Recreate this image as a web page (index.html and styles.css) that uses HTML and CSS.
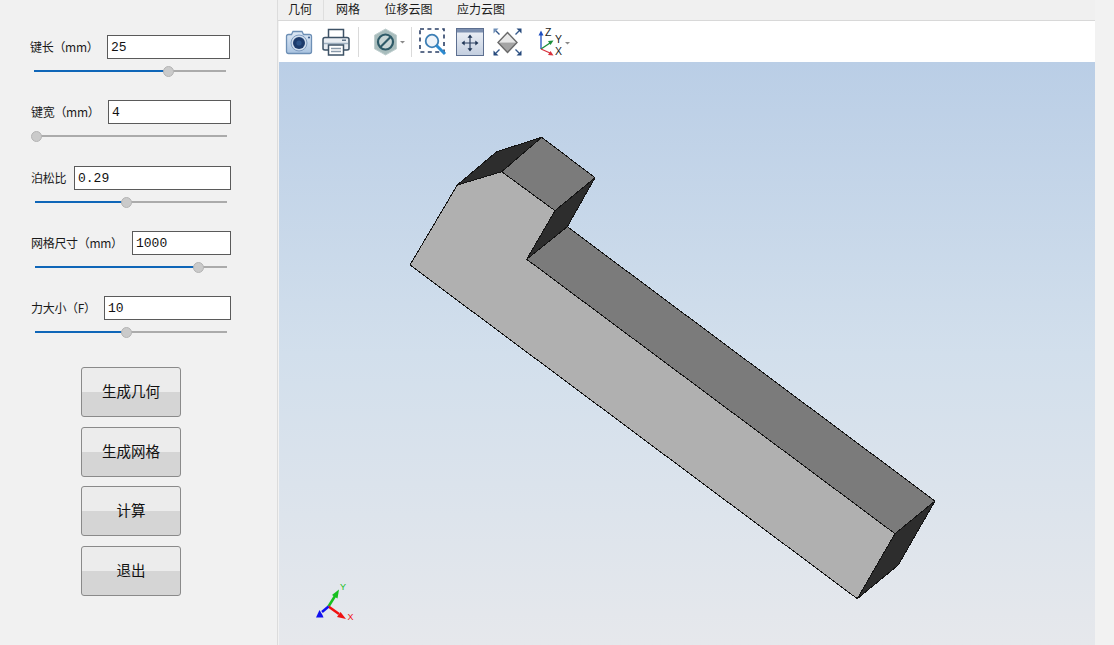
FILE: index.html
```html
<!DOCTYPE html>
<html lang="zh">
<head>
<meta charset="utf-8">
<title>键参数</title>
<link rel="stylesheet" href="styles.css">
</head>
<body>
<div class="app">
  <aside class="panel">
    <div class="field field-a">
      <div class="field-row"><label class="field-label">键长（mm）</label><input class="field-input w-a" value="25"></div>
      <div class="slider"><div class="slider-fill" style="width:70%"></div><div class="slider-knob" style="left:70%"></div></div>
    </div>
    <div class="field">
      <div class="field-row"><label class="field-label">键宽（mm）</label><input class="field-input w-a" value="4"></div>
      <div class="slider"><div class="slider-fill" style="width:0"></div><div class="slider-knob" style="left:.5%"></div></div>
    </div>
    <div class="field field-c">
      <div class="field-row"><label class="field-label">泊松比</label><input class="field-input w-c" value="0.29"></div>
      <div class="slider"><div class="slider-fill" style="width:47.5%"></div><div class="slider-knob" style="left:47.5%"></div></div>
    </div>
    <div class="field">
      <div class="field-row"><label class="field-label">网格尺寸（mm）</label><input class="field-input w-d" value="1000"></div>
      <div class="slider"><div class="slider-fill" style="width:85%"></div><div class="slider-knob" style="left:85%"></div></div>
    </div>
    <div class="field">
      <div class="field-row"><label class="field-label">力大小（F）</label><input class="field-input w-e" value="10"></div>
      <div class="slider"><div class="slider-fill" style="width:47.5%"></div><div class="slider-knob" style="left:47.5%"></div></div>
    </div>
    <div class="actions">
      <button class="action">生成几何</button>
      <button class="action">生成网格</button>
      <button class="action action-tight">计算</button>
      <button class="action">退出</button>
    </div>
  </aside>

  <main class="workspace">
    <nav class="tabs">
      <div class="tab tab-active">几何</div>
      <div class="tab">网格</div>
      <div class="tab">位移云图</div>
      <div class="tab">应力云图</div>
    </nav>
    <div class="toolbar">
      <svg class="icon i-camera" width="28" height="28" viewBox="0 0 28 28">
        <defs><linearGradient id="cam" x1="0" y1="0" x2="0" y2="1"><stop offset="0" stop-color="#dfe9f5"/><stop offset="1" stop-color="#a9c3e0"/></linearGradient></defs>
        <g transform="translate(0 1)">
          <path d="M1.5 7.5q0-2 2-2h3l1.5-3h9l1.5 3h6q2 0 2 2v15q0 2-2 2h-21q-2 0-2-2z" fill="url(#cam)" stroke="#6d8fb5" stroke-width="1.3"/>
          <circle cx="14" cy="14" r="8" fill="#cfdcec" stroke="#7f9cc0"/>
          <circle cx="14" cy="14" r="6" fill="#1c3a6b"/>
          <circle cx="14" cy="14" r="2.6" fill="#2c5288"/>
          <circle cx="24" cy="8.5" r="1.1" fill="#41628f"/>
        </g>
      </svg>
      <svg class="icon i-printer" width="28" height="28" viewBox="0 0 28 28">
        <path d="M6.5 10V1.500h15V10" fill="#fff" stroke="#3d5266" stroke-width="1.5"/>
        <path d="M3 9.500h22q2 0 2 2v9q0 1.500-2 1.500H3q-2 0-2-1.500v-9q0-2 2-2z" fill="#e9edf2" stroke="#3d5266" stroke-width="1.5"/>
        <path d="M2 15.500h24" stroke="#9fb0c0" stroke-width="1.5"/>
        <rect x="20" y="11.500" width="4" height="1.500" fill="#5f7488"/>
        <rect x="6.500" y="17" width="15" height="10" fill="#fff" stroke="#3d5266" stroke-width="1.5"/>
        <path d="M9 20.500h10M9 23.500h10" stroke="#8a9aaa" stroke-width="1.5"/>
      </svg>
      <div class="divider d-one"></div>
      <svg class="icon i-display" width="34" height="28" viewBox="0 0 34 28">
        <path d="M12.500 1 23.500 7.200v13.600L12.500 27 1.500 20.800V7.200z" fill="#a8bcbc" stroke="#c0cfcf" stroke-width="1"/>
        <circle cx="12.500" cy="14" r="7.500" fill="#c9d6d6" stroke="#2e5a68" stroke-width="2.200"/>
        <path d="M7.500 19 17.500 9" stroke="#2e5a68" stroke-width="2.200"/>
        <path d="M27 13h5l-2.500 2.500z" fill="#8a8a8a"/>
      </svg>
      <div class="divider d-two"></div>
      <svg class="icon i-zoom" width="28" height="28" viewBox="0 0 28 28">
        <rect x="1" y="1" width="24" height="23" fill="none" stroke="#2a3f66" stroke-width="1.600" stroke-dasharray="4 3.400"/>
        <circle cx="13" cy="13" r="6.300" fill="#eef3f9" stroke="#3d7fb5" stroke-width="1.800"/>
        <path d="M17.500 17.500 26 26" stroke="#2b8ad0" stroke-width="3"/>
      </svg>
      <svg class="icon i-fit" width="28" height="28" viewBox="0 0 28 28">
        <defs><linearGradient id="fit" x1="0" y1="0" x2="0" y2="1"><stop offset="0" stop-color="#f0f3f8"/><stop offset="1" stop-color="#c3cedf"/></linearGradient></defs>
        <rect x=".5" y=".5" width="27" height="27" fill="url(#fit)" stroke="#5d6f90"/>
        <rect x="1" y="1" width="26" height="3.500" fill="#7d90b0"/>
        <path d="M14 8v14M7 15h14" stroke="#2b3f60" stroke-width="1.200"/>
        <path d="M14 6.500l2.500 3.200h-5zM14 23.500l2.500-3.200h-5zM5.500 15l3.200-2.500v5zM22.500 15l-3.200-2.500v5z" fill="#223858"/>
      </svg>
      <svg class="icon i-diamond" width="29" height="28" viewBox="0 0 29 28">
        <path d="M14.500 4.500 24 14.500H5z" fill="#e8e8e8"/>
        <path d="M5 14.500h19l-9.500 10z" fill="#a4a4a4"/>
        <path d="M14.500 4.500 24 14.500 14.500 24.500 5 14.500z" fill="none" stroke="#6a6a6a" stroke-width="1.400"/>
        <path d="M.5.500h5L.5 5.500z" fill="#6f8fb8"/>
        <path d="M28.500.500h-5L28.500 5.500z" fill="#274a7c"/>
        <path d="M.5 27.500h5L.5 22.500z" fill="#274a7c"/>
        <path d="M28.500 27.500h-5L28.500 22.500z" fill="#274a7c"/>
        <path d="M3 3l3.500 3.500M26 3l-3.500 3.500M3 25l3.500-3.500M26 25l-3.500-3.500" stroke="#34588a" stroke-width="1.400"/>
      </svg>
      <svg class="icon i-axes" width="34" height="28" viewBox="0 0 34 28">
        <path d="M3 21V6" stroke="#1f4fc0" stroke-width="1.300"/>
        <path d="M3 2.500l2.500 5h-5z" fill="#1f4fc0"/>
        <path d="M3 21 12 15" stroke="#1d8f3c" stroke-width="1.300"/>
        <path d="M15.500 12.500l-5.500.500 2.500 4z" fill="#1d8f3c"/>
        <path d="M3 21 12 25" stroke="#d8323c" stroke-width="1.300"/>
        <path d="M15.500 27.500l-5.500-.500 2.500-4z" fill="#d8323c"/>
        <text class="axis-mark" x="7" y="8">Z</text>
        <text class="axis-mark" x="17" y="15">Y</text>
        <text class="axis-mark" x="17" y="27">X</text>
        <path d="M27 14h5l-2.500 2.500z" fill="#8a8a8a"/>
      </svg>
    </div>
    <div class="viewport">
      <svg class="scene" viewBox="279 62 816 583" width="816" height="583">
        <defs>
          <linearGradient id="sky" x1="0" y1="0" x2="0" y2="1">
            <stop offset="0" stop-color="#bacee6"/>
            <stop offset=".5" stop-color="#d2dfec"/>
            <stop offset="1" stop-color="#e6e8ec"/>
          </linearGradient>
        </defs>
        <rect x="279" y="62" width="816" height="583" fill="url(#sky)"/>
        <g class="edges">
          <polygon class="face-dark" points="457.300,185 496.700,151.700 541.700,137.300 501.700,171.700"/>
          <polygon class="face-dark" points="555,210.700 595,177.700 567.300,226.700 526.700,259.300"/>
          <polygon class="face-dark" points="895,533.700 935,501 898.300,565 857.300,598.700"/>
          <polygon class="face-mid" points="501.700,171.700 541.700,137.300 595,177.700 555,210.700"/>
          <polygon class="face-mid" points="526.700,259.300 567.300,226.700 935,501 895,533.700"/>
          <polygon class="face-light" points="410,265 457.300,185 501.700,171.700 555,210.700 526.700,259.300 895,533.700 857.300,598.700"/>
        </g>
        <g class="triad">
          <path class="ax-y" d="M328.500 606.500 335 596"/>
          <path class="tip-y" d="M339 589.500l-1.500 9-5.500-3.500z"/>
          <path class="ax-x" d="M328.500 606.500 339 614"/>
          <path class="tip-x" d="M346 619l-9-2 3.500-5z"/>
          <path class="ax-z" d="M328.500 606.500 322 612"/>
          <path class="tip-z" d="M316 617.500h7.500l-1-2.500 -3-5z"/>
          <text class="t-y" x="340" y="589.500">Y</text>
          <text class="t-x" x="347.500" y="620">X</text>
        </g>
      </svg>
    </div>
  </main>
  <div class="margin-strip"></div>
</div>
</body>
</html>
```
FILE: styles.css
```css
html, body {
  margin: 0;
  height: 100%;
  overflow: hidden;
  background: #f2f2f2;
}
.app {
  display: flex;
  width: 1114px;
  height: 645px;
  font-family: "Noto Sans CJK SC", "Liberation Sans", sans-serif;
  color: #1a1a1a;
}

/* Left parameter panel */
.panel {
  width: 278px;
  flex: none;
  box-sizing: border-box;
  padding: 35px 46px 0 31px;
  border-right: 1px solid #dcdcdc;
  background: #f1f1f1;
}
.field {
  height: 65px;
}
.field-a {
  margin-left: -1px;
  margin-right: 1px;
}
.field-c {
  margin-top: 1px;
}
.field-row {
  display: flex;
  justify-content: space-between;
  align-items: center;
  height: 24px;
}
.field-label {
  flex: none;
  font-size: 12px;
  line-height: 20px;
  margin-top: -1px;
  letter-spacing: -.3px;
}
.field-input {
  flex: none;
  box-sizing: border-box;
  height: 24px;
  margin: 0;
  padding: 1px 3px 0;
  border: 1px solid #5a5a5a;
  border-radius: 0;
  outline: 0;
  background: #fff;
  color: #111;
  font-family: "Liberation Mono", "DejaVu Sans Mono", monospace;
  font-size: 13px;
}
.w-a { width: 123px; }
.w-c { width: 157px; }
.w-d { width: 99px; }
.w-e { width: 127px; }
.slider {
  position: relative;
  height: 2px;
  margin: 11px 4px 0;
  background: #ababab;
}
.slider-fill {
  height: 2px;
  background: #0f66b8;
}
.slider-knob {
  position: absolute;
  top: -4px;
  width: 11px;
  height: 11px;
  margin-left: -5px;
  box-sizing: border-box;
  border: 1px solid #b4b4b4;
  border-radius: 50%;
  background: #cacaca;
}
.actions {
  display: flex;
  flex-direction: column;
  gap: 10px;
  width: 100px;
  margin: 6px 0 0 50px;
}
.action {
  height: 50px;
  padding: 0 0 3px;
  box-sizing: border-box;
  border: 1px solid #8a8a8a;
  border-radius: 3px;
  background: linear-gradient(#ececec 0, #ececec 50%, #d5d5d5 50%, #d5d5d5 100%);
  color: #111;
  font-family: inherit;
  font-size: 14.500px;
}
.action-tight {
  margin-top: -1px;
}

/* Right workspace */
.workspace {
  width: 817px;
  flex: none;
  display: flex;
  flex-direction: column;
}
.tabs {
  display: flex;
  height: 20px;
  padding-left: 1px;
  border-bottom: 1px solid #d8d8d8;
  background: #f0f0f0;
  font-size: 12px;
  line-height: 18px;
}
.tab {
  padding: 0 12.500px 0 12px;
}
.tab-active {
  padding: 0 11px 0 9px;
  border-right: 1px solid #dedede;
}
.toolbar {
  display: flex;
  align-items: center;
  flex: none;
  height: 41px;
  margin-left: 1px;
  padding-left: 6px;
  background: #fff;
}
.icon {
  display: block;
  flex: none;
  overflow: visible;
}
.i-printer { margin-left: 9px; }
.i-display { margin-left: 14px; }
.i-zoom { margin-left: 7px; }
.i-fit { margin-left: 9px; }
.i-diamond { margin-left: 9px; }
.i-axes { margin-left: 16px; }
.divider {
  flex: none;
  width: 1px;
  height: 30px;
  background: #dadada;
}
.d-one { margin-left: 8px; }
.d-two { margin-left: 4px; }
.axis-mark {
  font-family: "Liberation Sans", sans-serif;
  font-size: 10.500px;
  fill: #222;
}
.viewport {
  flex: 1;
  margin-left: 1px;
  min-height: 0;
}
.scene {
  display: block;
}
.edges polygon {
  stroke: #141414;
  stroke-width: 1;
  stroke-linejoin: round;
  shape-rendering: crispEdges;
}
.face-light { fill: #b0b0b0; }
.face-mid { fill: #7b7b7b; }
.face-dark { fill: #2d2d2d; }
.triad path { stroke-width: 2.500; fill: none; }
.ax-y { stroke: #16c01e; }
.ax-x { stroke: #f01010; }
.ax-z { stroke: #1010f0; }
.triad .tip-y { fill: #16c01e; stroke: none; }
.triad .tip-x { fill: #f01010; stroke: none; }
.triad .tip-z { fill: #1010f0; stroke: none; }
.triad text {
  font-family: "Liberation Sans", sans-serif;
  font-size: 9px;
}
.t-y { fill: #16c01e; }
.t-x { fill: #f01010; }
.margin-strip {
  flex: 1;
  background: #f2f2f2;
}
```
